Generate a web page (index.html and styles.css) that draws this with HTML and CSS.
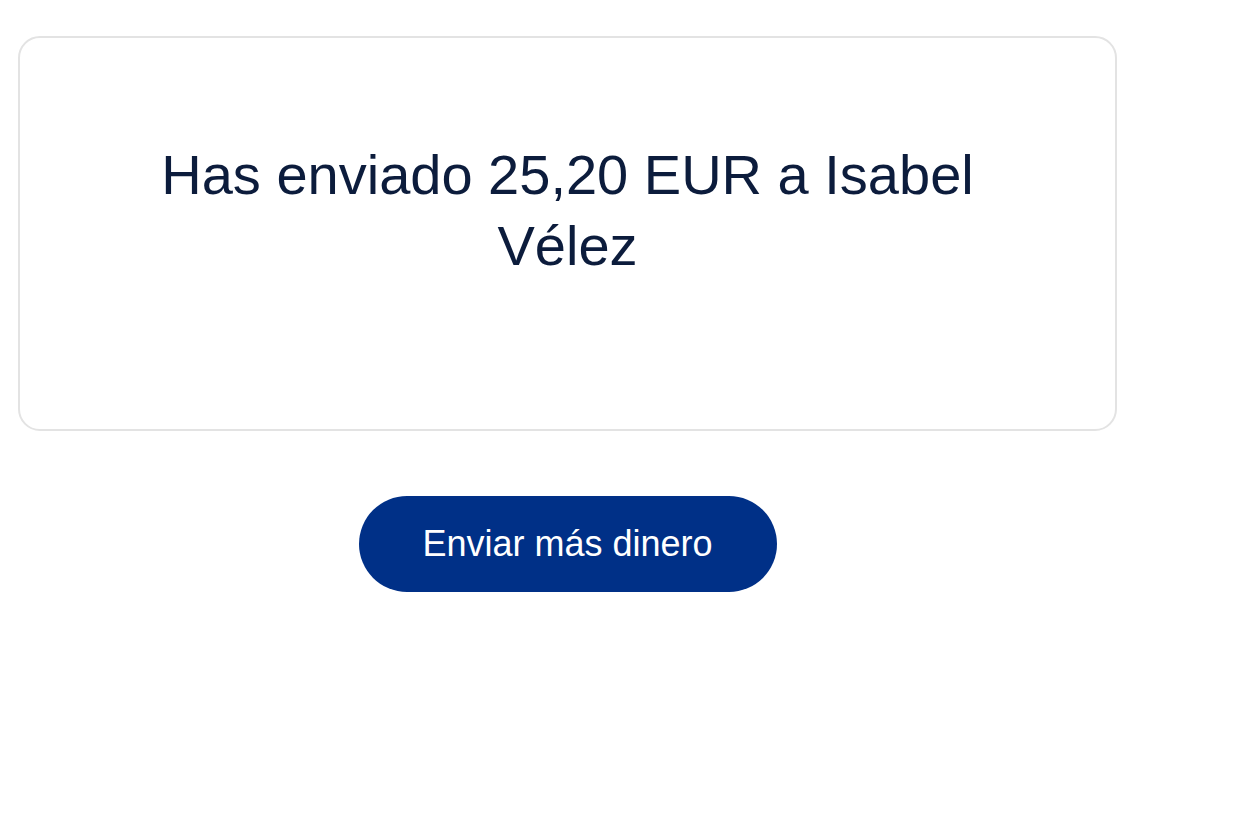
FILE: index.html
```html
<!DOCTYPE html>
<html lang="es">
<head>
<meta charset="utf-8">
<title>Enviado</title>
<link rel="stylesheet" href="styles.css">
</head>
<body>
<main class="page">
  <section class="card">
    <h1 class="title">Has enviado 25,20 EUR a Isabel Vélez</h1>
  </section>
  <div class="actions">
    <button class="btn-primary" type="button">Enviar más dinero</button>
  </div>
</main>
</body>
</html>
```

FILE: styles.css
```css
html, body {
  margin: 0;
  padding: 0;
  background: #ffffff;
}

body {
  font-family: "Liberation Sans", Arial, sans-serif;
}

.page {
  width: 1099px;
  padding: 36px 0 0 18px;
}

.card {
  box-sizing: border-box;
  height: 395px;
  border: 2px solid #e3e3e3;
  border-radius: 22px;
  padding: 101px 120px 0;
}

.title {
  margin: 0;
  font-size: 56px;
  line-height: 71px;
  font-weight: 400;
  color: #0c1c3c;
  text-align: center;
}

.actions {
  display: flex;
  justify-content: center;
  padding-top: 65px;
}

.btn-primary {
  width: 418px;
  height: 96px;
  border: 0;
  border-radius: 48px;
  background: #003087;
  color: #ffffff;
  font-family: "Liberation Sans", Arial, sans-serif;
  font-size: 36px;
  font-weight: 400;
  display: flex;
  align-items: center;
  justify-content: center;
  cursor: pointer;
}
```
